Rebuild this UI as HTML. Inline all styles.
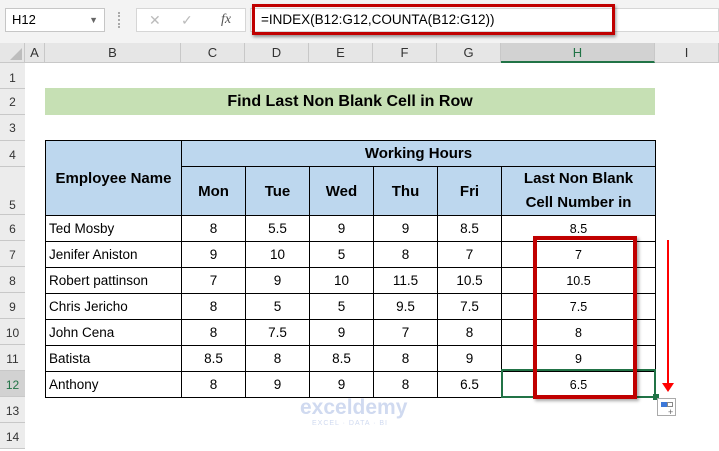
<!DOCTYPE html>
<html><head><style>
body{margin:0;width:719px;height:444px;overflow:hidden;background:#fff;font-family:"Liberation Sans",sans-serif;position:relative}
.a{position:absolute;box-sizing:border-box}
.ch{position:absolute;top:43px;height:20px;font-size:13px;color:#333;text-align:center;line-height:20px;border-right:1px solid #c8c8c8;box-sizing:border-box}
.rh{position:absolute;left:0;width:25px;font-size:12px;color:#333;text-align:center;border-bottom:1px solid #c8c8c8;box-sizing:border-box;background:#ececec}
table{position:absolute;left:45px;top:140px;border-collapse:collapse;font-size:13.5px}
td{border:1.5px solid #000;padding:0;text-align:center;color:#000}
.h{background:#bdd7ee;font-weight:bold;font-size:15px}
.n{text-align:left;padding-left:3px}
</style></head><body>
<div class="a" style="left:0;top:0;width:719px;height:43px;background:#f3f3f3"></div>
<div class="a" style="left:5px;top:8px;width:100px;height:24px;background:#fff;border:1px solid #c6c6c6;font-size:13px;line-height:22px;padding-left:6px">H12<span style="position:absolute;right:6px;top:0;font-size:9px;color:#666">▼</span></div>
<div class="a" style="left:118px;top:12px;width:4px;height:16px;border-left:2px dotted #aaa"></div>
<div class="a" style="left:136px;top:8px;width:110px;height:24px;background:#fff;border:1px solid #d6d6d6;font-size:14px;color:#bbb;line-height:22px"><span style="position:absolute;left:12px">✕</span><span style="position:absolute;left:44px">✓</span><span style="position:absolute;left:84px;color:#555;font-family:'Liberation Serif',serif;font-style:italic">fx</span></div>
<div class="a" style="left:250px;top:8px;width:469px;height:24px;background:#fff;border:1px solid #d6d6d6"></div>
<div class="a" style="left:252px;top:4px;width:363px;height:31px;border:3px solid #c00000;box-shadow:1px 2px 3px rgba(0,0,0,.4);font-size:13.5px;line-height:25px;padding-left:6px">=INDEX(B12:G12,COUNTA(B12:G12))</div>
<div class="a" style="left:0;top:43px;width:719px;height:20px;background:#e6e6e6;border-bottom:1px solid #c8c8c8"></div>
<div class="a" style="left:10px;top:48px;width:0;height:0;border-left:12px solid transparent;border-bottom:12px solid #bdbdbd"></div>
<div class="ch" style="left:0;width:25px"></div>
<div class="ch" style="left:25px;width:20px">A</div>
<div class="ch" style="left:45px;width:136px">B</div>
<div class="ch" style="left:181px;width:64px">C</div>
<div class="ch" style="left:245px;width:64px">D</div>
<div class="ch" style="left:309px;width:64px">E</div>
<div class="ch" style="left:373px;width:64px">F</div>
<div class="ch" style="left:437px;width:64px">G</div>
<div class="ch" style="left:501px;width:154px;background:#d2d2d2;border-bottom:2px solid #217346;color:#217346">H</div>
<div class="ch" style="left:655px;width:64px">I</div>
<div class="a" style="left:0;top:63px;width:25px;height:381px;background:#ececec;border-right:1px solid #c8c8c8"></div>
<div class="rh" style="top:63px;height:26px;line-height:30px">1</div>
<div class="rh" style="top:89px;height:26px;line-height:26px">2</div>
<div class="rh" style="top:115px;height:26px;line-height:26px">3</div>
<div class="rh" style="top:141px;height:26px;line-height:28px">4</div>
<div class="rh" style="top:167px;height:48px;line-height:76px">5</div>
<div class="rh" style="top:215px;height:26px;line-height:28px">6</div>
<div class="rh" style="top:241px;height:26px;line-height:28px">7</div>
<div class="rh" style="top:267px;height:26px;line-height:28px">8</div>
<div class="rh" style="top:293px;height:26px;line-height:28px">9</div>
<div class="rh" style="top:319px;height:26px;line-height:28px">10</div>
<div class="rh" style="top:345px;height:26px;line-height:28px">11</div>
<div class="rh" style="top:371px;height:26px;line-height:28px;background:#d2d2d2;color:#217346">12</div>
<div class="rh" style="top:397px;height:26px;line-height:28px">13</div>
<div class="rh" style="top:423px;height:26px;line-height:28px">14</div>
<div class="a" style="left:45px;top:88px;width:610px;height:27px;background:#c6e0b4;font-weight:bold;font-size:16px;text-align:center;line-height:27px">Find Last Non Blank Cell in Row</div>
<table>
<colgroup><col style="width:136px"><col style="width:64px"><col style="width:64px"><col style="width:64px"><col style="width:64px"><col style="width:64px"><col style="width:154px"></colgroup>
<tr style="height:26px"><td class="h" rowspan="2" style="vertical-align:middle">Employee Name</td><td class="h" colspan="6">Working Hours</td></tr>
<tr style="height:48px"><td class="h">Mon</td><td class="h">Tue</td><td class="h">Wed</td><td class="h">Thu</td><td class="h">Fri</td><td class="h" style="line-height:24px">Last Non Blank<br>Cell Number in</td></tr>
<tr style="height:26px"><td class="n">Ted Mosby</td><td>8</td><td>5.5</td><td>9</td><td>9</td><td>8.5</td><td style="font-size:12.5px">8.5</td></tr>
<tr style="height:26px"><td class="n">Jenifer Aniston</td><td>9</td><td>10</td><td>5</td><td>8</td><td>7</td><td style="font-size:12.5px">7</td></tr>
<tr style="height:26px"><td class="n">Robert pattinson</td><td>7</td><td>9</td><td>10</td><td>11.5</td><td>10.5</td><td style="font-size:12.5px">10.5</td></tr>
<tr style="height:26px"><td class="n">Chris Jericho</td><td>8</td><td>5</td><td>5</td><td>9.5</td><td>7.5</td><td style="font-size:12.5px">7.5</td></tr>
<tr style="height:26px"><td class="n">John Cena</td><td>8</td><td>7.5</td><td>9</td><td>7</td><td>8</td><td style="font-size:12.5px">8</td></tr>
<tr style="height:26px"><td class="n">Batista</td><td>8.5</td><td>8</td><td>8.5</td><td>8</td><td>9</td><td style="font-size:12.5px">9</td></tr>
<tr style="height:26px"><td class="n">Anthony</td><td>8</td><td>9</td><td>9</td><td>8</td><td>6.5</td><td style="font-size:12.5px">6.5</td></tr>
</table>
<div class="a" style="left:501px;top:369px;width:155px;height:29px;border:2px solid #217346"></div>
<div class="a" style="left:653px;top:394px;width:6px;height:6px;background:#217346"></div>
<div class="a" style="left:533px;top:236px;width:104px;height:163px;border:4px solid #c00000;box-shadow:2px 2px 3px rgba(0,0,0,.35)"></div>
<div class="a" style="left:667px;top:240px;width:2px;height:145px;background:#f00"></div>
<div class="a" style="left:662px;top:383px;width:0;height:0;border-left:6px solid transparent;border-right:6px solid transparent;border-top:9px solid #f00"></div>
<div class="a" style="left:657px;top:398px;width:19px;height:18px;border:1px solid #aaa;background:#fff"><div class="a" style="left:3px;top:3px;width:6px;height:5px;background:#3c78d8"></div><div class="a" style="left:9px;top:3px;width:6px;height:5px;border:1px solid #888"></div><div class="a" style="left:10px;top:8px;font-size:9px;color:#666">+</div></div>
<div class="a" style="left:300px;top:396px;font-size:21px;font-weight:bold;color:#d0daf0">exceldemy</div>
<div class="a" style="left:312px;top:420px;font-size:7px;color:#d0daf0;letter-spacing:1px">EXCEL · DATA · BI</div>
</body></html>
